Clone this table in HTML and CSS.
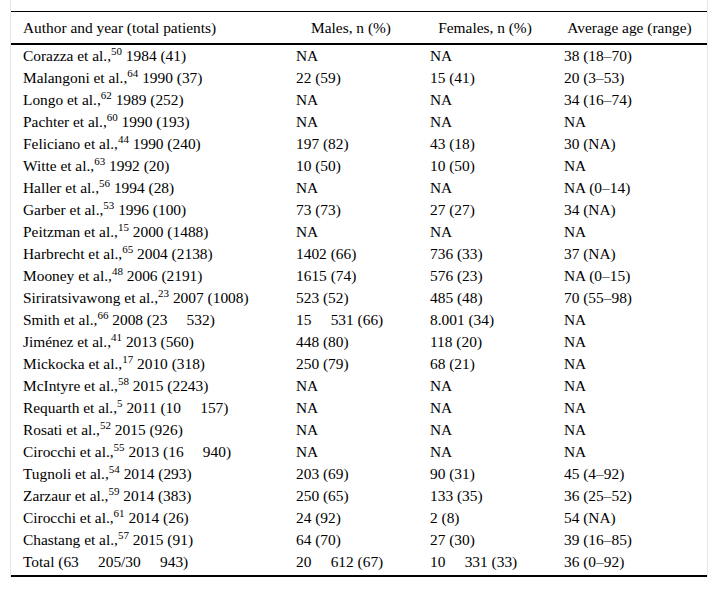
FILE: index.html
```html
<!DOCTYPE html>
<html>
<head>
<meta charset="utf-8">
<link rel="stylesheet" href="styles.css">
</head>
<body>
<div class="frame">
<table class="data">
  <colgroup>
    <col class="c1"><col class="c2"><col class="c3"><col class="c4">
  </colgroup>
  <thead>
    <tr><th class="left">Author and year (total patients)</th><th>Males, n (%)</th><th>Females, n (%)</th><th>Average age (range)</th></tr>
  </thead>
  <tbody>
    <tr><td>Corazza et al.,<sup>50</sup> 1984 (41)</td><td>NA</td><td>NA</td><td>38 (18–70)</td></tr>
    <tr><td>Malangoni et al.,<sup>64</sup> 1990 (37)</td><td>22 (59)</td><td>15 (41)</td><td>20 (3–53)</td></tr>
    <tr><td>Longo et al.,<sup>62</sup> 1989 (252)</td><td>NA</td><td>NA</td><td>34 (16–74)</td></tr>
    <tr><td>Pachter et al.,<sup>60</sup> 1990 (193)</td><td>NA</td><td>NA</td><td>NA</td></tr>
    <tr><td>Feliciano et al.,<sup>44</sup> 1990 (240)</td><td>197 (82)</td><td>43 (18)</td><td>30 (NA)</td></tr>
    <tr><td>Witte et al.,<sup>63</sup> 1992 (20)</td><td>10 (50)</td><td>10 (50)</td><td>NA</td></tr>
    <tr><td>Haller et al.,<sup>56</sup> 1994 (28)</td><td>NA</td><td>NA</td><td>NA (0–14)</td></tr>
    <tr><td>Garber et al.,<sup>53</sup> 1996 (100)</td><td>73 (73)</td><td>27 (27)</td><td>34 (NA)</td></tr>
    <tr><td>Peitzman et al.,<sup>15</sup> 2000 (1488)</td><td>NA</td><td>NA</td><td>NA</td></tr>
    <tr><td>Harbrecht et al.,<sup>65</sup> 2004 (2138)</td><td>1402 (66)</td><td>736 (33)</td><td>37 (NA)</td></tr>
    <tr><td>Mooney et al.,<sup>48</sup> 2006 (2191)</td><td>1615 (74)</td><td>576 (23)</td><td>NA (0–15)</td></tr>
    <tr><td>Siriratsivawong et al.,<sup>23</sup> 2007 (1008)</td><td>523 (52)</td><td>485 (48)</td><td>70 (55–98)</td></tr>
    <tr><td>Smith et al.,<sup>66</sup> 2008 (23&emsp;&nbsp;532)</td><td>15&emsp;&nbsp;531 (66)</td><td>8.001 (34)</td><td>NA</td></tr>
    <tr><td>Jiménez et al.,<sup>41</sup> 2013 (560)</td><td>448 (80)</td><td>118 (20)</td><td>NA</td></tr>
    <tr><td>Mickocka et al.,<sup>17</sup> 2010 (318)</td><td>250 (79)</td><td>68 (21)</td><td>NA</td></tr>
    <tr><td>McIntyre et al.,<sup>58</sup> 2015 (2243)</td><td>NA</td><td>NA</td><td>NA</td></tr>
    <tr><td>Requarth et al.,<sup>5</sup> 2011 (10&emsp;&nbsp;157)</td><td>NA</td><td>NA</td><td>NA</td></tr>
    <tr><td>Rosati et al.,<sup>52</sup> 2015 (926)</td><td>NA</td><td>NA</td><td>NA</td></tr>
    <tr><td>Cirocchi et al.,<sup>55</sup> 2013 (16&emsp;&nbsp;940)</td><td>NA</td><td>NA</td><td>NA</td></tr>
    <tr><td>Tugnoli et al.,<sup>54</sup> 2014 (293)</td><td>203 (69)</td><td>90 (31)</td><td>45 (4–92)</td></tr>
    <tr><td>Zarzaur et al.,<sup>59</sup> 2014 (383)</td><td>250 (65)</td><td>133 (35)</td><td>36 (25–52)</td></tr>
    <tr><td>Cirocchi et al.,<sup>61</sup> 2014 (26)</td><td>24 (92)</td><td>2 (8)</td><td>54 (NA)</td></tr>
    <tr><td>Chastang et al.,<sup>57</sup> 2015 (91)</td><td>64 (70)</td><td>27 (30)</td><td>39 (16–85)</td></tr>
    <tr class="last"><td>Total (63&emsp;&nbsp;205/30&emsp;&nbsp;943)</td><td>20&emsp;&nbsp;612 (67)</td><td>10&emsp;&nbsp;331 (33)</td><td>36 (0–92)</td></tr>
  </tbody>
</table>
</div>
</body>
</html>
```

FILE: styles.css
```css
html, body {
  margin: 0;
  padding: 0;
  background: #ffffff;
}
body {
  font-family: "Liberation Serif", "Times New Roman", "DejaVu Serif", serif;
  font-size: 15.4px;
  color: #000000;
}
.frame {
  margin-left: 10px;
  width: 696px;
  border-left: 1px solid #e6e6e6;
  border-right: 1px solid #e6e6e6;
  padding-top: 11px;
}
.data {
  width: 696px;
  border-collapse: collapse;
  table-layout: fixed;
  border-top: 1px solid #000;
  border-bottom: 2px solid #000;
}
.c1 { width: 273px; }
.c2 { width: 134px; }
.c3 { width: 134px; }
.c4 { width: 155px; }
.data th {
  font-weight: normal;
  text-align: center;
  height: 31px;
  padding: 0 12px;
  border-bottom: 2px solid #000;
  white-space: nowrap;
  vertical-align: middle;
  line-height: 18px;
}
.data th.left {
  text-align: left;
}
.data td {
  height: 22px;
  padding: 0 12px;
  text-align: left;
  white-space: nowrap;
  vertical-align: middle;
  line-height: 18px;
}
.data tr.last td {
  vertical-align: top;
  padding-top: 2px;
  height: 22px;
}
.data sup {
  font-size: 11px;
  line-height: 0;
  vertical-align: 6px;
}
```
